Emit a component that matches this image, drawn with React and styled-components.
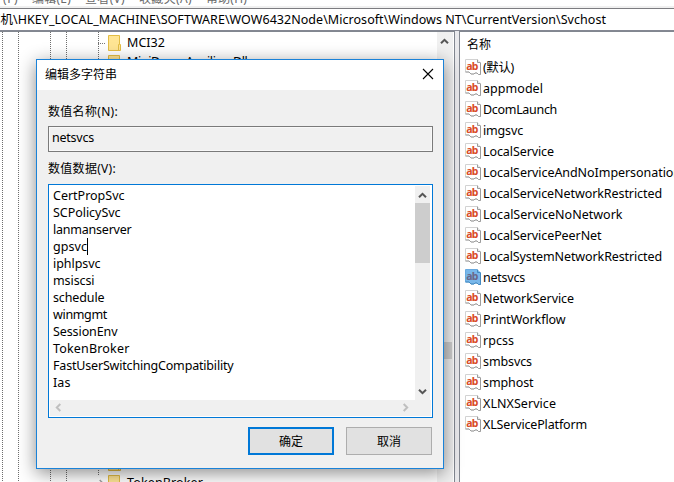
import React, { useLayoutEffect, useRef, useState } from "react";
import styled, { createGlobalStyle, css } from "styled-components";

const Global = createGlobalStyle`
  * { box-sizing: border-box; }
  body {
    margin: 0;
    overflow: hidden;
    background: #fff;
    color: #000;
    font: 12.5px/17px "Noto Sans", "Noto Sans CJK SC", sans-serif;
  }
`;

const Window = styled.div`
  position: relative;
  width: 674px;
  height: 482px;
  overflow: hidden;
  display: flex;
  flex-direction: column;
  background: #fff;
`;

const MenuBar = styled.nav`
  height: 8px;
  flex: none;
  display: flex;
  gap: 14px;
  align-items: flex-end;
  padding-bottom: 1px;
  margin-left: -22px;
  background: linear-gradient(#fff 0 6px, #f0f0f0 6px);
  color: #6a6a6a;
  font-size: 12px;
`;

const AddressBar = styled.div`
  height: 23px;
  flex: none;
  display: flex;
  align-items: center;
  margin-left: -12px;
  border-top: 1px solid #7c7c80;
  border-bottom: 1px solid #858893;
`;

const Panes = styled.div`
  flex: 1;
  display: flex;
  min-height: 0;
  background: #e9e9ec;
`;

const TreePane = styled.section`
  width: 455px;
  flex: none;
  display: flex;
  border-top: 1px solid #828790;
  border-right: 1px solid #828790;
  background: #fff;
`;

const dotted = "repeating-linear-gradient(#6e6e6e 0 1px, transparent 1px 2px)";

const Tree = styled.div`
  width: 437px;
  padding-top: 1px;
  display: flex;
  flex-direction: column;
  justify-content: space-between;
  background-image: ${dotted}, ${dotted}, ${dotted}, ${dotted}, ${dotted};
  background-size: 1px 100%;
  background-repeat: no-repeat;
  background-position: 2px 0, 18px 0, 50px 0, 66px 0, 98px 0;
`;

const TreeGroup = styled.div`
  margin-bottom: ${(p) => (p.$last ? "-11px" : 0)};
`;

const TreeRow = styled.div`
  height: 20px;
  display: flex;
  align-items: center;
  padding-left: 97px;
`;

const TreeName = styled.div`
  display: flex;
  margin-left: -1px;
  padding-bottom: ${(p) => (p.$raised ? "3px" : "1px")};
`;

const Hook = styled.span`
  width: 11px;
  flex: none;
  height: ${(p) => (p.$expand ? "14px" : "1px")};
  background: ${(p) =>
    p.$expand
      ? "#fff"
      : "repeating-linear-gradient(90deg, transparent 0 1px, #777 1px 2px) no-repeat 0 0 / 8px 1px"};
  display: flex;
  align-items: center;
`;

const FolderBox = styled.svg`
  width: 13px;
  height: 16px;
  flex: none;
  margin-right: 7px;
`;

const TreeScroll = styled.div`
  width: 16px;
  display: flex;
  flex-direction: column;
  align-items: center;
  background: #f0f0f0;
  padding: 5px 1px 0 0;
`;

const TreeThumb = styled.div`
  width: 15px;
  height: 17px;
  margin-top: 296px;
  background: #cdcdcd;
`;

const ListPane = styled.section`
  flex: 1;
  margin-left: 4px;
  min-width: 0;
  overflow: hidden;
  border-top: 1px solid #828790;
  border-left: 1px solid #828790;
  background: #fff;
`;

const ListHeader = styled.div`
  height: 25px;
  padding: 4px 0 0 7px;
  font-size: 12px;
`;

const ValueRow = styled.div`
  height: 21px;
  display: flex;
  align-items: center;
  padding-left: 5px;
`;

const ValueIconBox = styled.svg`
  width: 16px;
  height: 16px;
  flex: none;
  margin: 0 2px 1px 0;
`;

const AbText = styled.text`
  font: 700 10.5px "Noto Sans", "Open Sans", sans-serif;
`;

const Dialog = styled.div`
  position: absolute;
  left: 36px;
  top: 59px;
  width: 408px;
  height: 410px;
  display: flex;
  flex-direction: column;
  border: 1px solid #1a82d8;
  background: #f0f0f0;
  box-shadow: 0 4px 17px rgba(0, 0, 0, 0.46);
`;

const TitleBar = styled.header`
  height: 30px;
  flex: none;
  display: flex;
  align-items: center;
  justify-content: space-between;
  padding: 0 9px 1px 8px;
  background: #fff;
  font-size: 12px;
`;

const TitleIcon = styled.svg`
  width: 12px;
  height: 12px;
  margin-bottom: 2px;
`;

const DialogBody = styled.div`
  flex: 1;
  display: flex;
  flex-direction: column;
  padding: 13px 10px 13px 11px;
`;

const FieldLabel = styled.label`
  height: 17px;
  margin-bottom: ${(p) => p.$gap}px;
  font-size: 12px;
`;

const NameField = styled.div`
  height: 26px;
  margin-bottom: 8px;
  padding: 2px 0 0 3px;
  border: 1px solid #7a7a7a;
  box-shadow: inset 0 0 0 1px #f8f8f8;
`;

const DataField = styled.div`
  height: 234px;
  display: grid;
  grid-template: 214px 16px / 365px 16px;
  padding: 1px;
  border: 1px solid #0078d7;
  background: #fff;
`;

const Lines = styled.div`
  padding: 1px 0 0 3px;
`;

const Line = styled.div`
  height: 17px;
  display: flex;
`;

const Caret = styled.span`
  width: 1px;
  height: 17px;
  background: #000;
`;

const VScroll = styled.div`
  width: 15px;
  display: flex;
  flex-direction: column;
  align-items: center;
  padding: 5px 0 4px;
  background: #f0f0f0;
`;

const VThumb = styled.div`
  width: 15px;
  height: 60px;
  margin: 3px 0 auto;
  background: #cdcdcd;
`;

const HScroll = styled.div`
  grid-column: 1 / 3;
  display: flex;
  align-items: center;
  justify-content: space-between;
  padding: 0 21px 1px 4px;
  background: #f0f0f0;
`;

const Buttons = styled.footer`
  display: flex;
  justify-content: flex-end;
  gap: 12px;
  margin: 9px 1px 0 0;
`;

const Button = styled.button`
  width: 86px;
  height: 28px;
  padding: 0 0 2px;
  background: #e1e1e1;
  font: 12px/17px "Noto Sans CJK SC", sans-serif;
  color: #000;
  border-radius: 0;
  ${(p) =>
    p.$primary
      ? css`border: 2px solid #0078d7;`
      : css`border: 1px solid #adadad;`}
`;

const Text = styled.span`
  white-space: pre;
  flex: none;
`;

/* Text tracked so that its advance equals the given width. */
function Fit({ width, children }) {
  const ref = useRef(null);
  const [spacing, setSpacing] = useState(0);
  useLayoutEffect(() => {
    const natural = ref.current.getBoundingClientRect().width;
    setSpacing((width - natural) / children.length);
  }, [width, children]);
  return (
    <Text ref={ref} style={{ letterSpacing: `${spacing}px` }}>
      {children}
    </Text>
  );
}

function Chevron({ turn = 0, color = "#555", weight = 2 }) {
  return (
    <svg width="9" height="9" viewBox="0 0 9 9">
      <path
        d="M1 6.3 4.5 2.8 8 6.3"
        fill="none"
        stroke={color}
        strokeWidth={weight}
        transform={`rotate(${turn} 4.5 4.5)`}
      />
    </svg>
  );
}

function Folder() {
  return (
    <FolderBox viewBox="0 0 13 16">
      <path d="M.5.5h11v9h1v6H.5z" fill="#ffe594" stroke="#e3bd45" />
      <path d="M10.5 15V9.5h1" fill="none" stroke="#e3bd45" />
    </FolderBox>
  );
}

function ValueIcon({ selected }) {
  return (
    <ValueIconBox viewBox="0 0 16 16">
      <path
        d="M.5.5H12l3.500 3.500v11.500h-2l-1.500-1.500h-2l-1 1H6l-2-2H.5z"
        fill={selected ? "#78b7ea" : "#fff"}
        stroke={selected ? "#68aae0" : "#d2d2d2"}
      />
      <path
        d="M12.500.5V3.500h3M15.500 4v11.500h-2l-1.500-1.500H10l-1 1H6l-2-2H.5"
        fill="none"
        stroke={selected ? "#4589bf" : "#9c9c9c"}
      />
      <AbText x="1.3" y="10.6" textLength="12.2" fill={selected ? "#6b6688" : "#d94a26"}>
        ab
      </AbText>
    </ValueIconBox>
  );
}

const values = [
  ["(默认)", 31],
  ["appmodel", 60],
  ["DcomLaunch", 74],
  ["imgsvc", 40],
  ["LocalService", 71],
  ["LocalServiceAndNoImpersonation", 198],
  ["LocalServiceNetworkRestricted", 179],
  ["LocalServiceNoNetwork", 139.5],
  ["LocalServicePeerNet", 118.5],
  ["LocalSystemNetworkRestricted", 179],
  ["netsvcs", 42],
  ["NetworkService", 91],
  ["PrintWorkflow", 82.5],
  ["rpcss", 31],
  ["smbsvcs", 49],
  ["smphost", 50.5],
  ["XLNXService", 73],
  ["XLServicePlatform", 104],
];

const services = [
  ["CertPropSvc", 71.5],
  ["SCPolicySvc", 67.5],
  ["lanmanserver", 78.5],
  ["gpsvc", 34],
  ["iphlpsvc", 47.5],
  ["msiscsi", 41.5],
  ["schedule", 51.5],
  ["winmgmt", 54],
  ["SessionEnv", 64.5],
  ["TokenBroker", 76.5],
  ["FastUserSwitchingCompatibility", 180.5],
  ["Ias", 17.5],
];

const menus = [
  ["文件(F)", 40],
  ["编辑(E)", 39],
  ["查看(V)", 40],
  ["收藏夹(A)", 53],
  ["帮助(H)", 41],
];

export default function App() {
  return (
    <Window>
      <Global />
      <MenuBar>
        {menus.map(([name, width]) => (
          <Fit key={name} width={width}>{name}</Fit>
        ))}
      </MenuBar>
      <AddressBar>
        <Fit width={25}>算机</Fit>
        <Fit width={593}>
          {"\\HKEY_LOCAL_MACHINE\\SOFTWARE\\WOW6432Node\\Microsoft\\Windows NT\\CurrentVersion\\Svchost"}
        </Fit>
      </AddressBar>
      <Panes>
        <TreePane>
          <Tree>
            <TreeGroup>
              <TreeRow>
                <Hook />
                <Folder />
                <TreeName><Fit width={38}>MCI32</Fit></TreeName>
              </TreeRow>
              <TreeRow>
                <Hook />
                <Folder />
                <TreeName $raised><Fit width={126}>MiniDumpAuxiliaryDlls</Fit></TreeName>
              </TreeRow>
            </TreeGroup>
            <TreeGroup $last>
              <TreeRow><Hook /><Folder /></TreeRow>
              <TreeRow>
                <Hook $expand><Chevron turn={90} color="#a0a0a0" weight={1.5} /></Hook>
                <Folder />
                <TreeName><Fit width={76}>TokenBroker</Fit></TreeName>
              </TreeRow>
            </TreeGroup>
          </Tree>
          <TreeScroll>
            <Chevron />
            <TreeThumb />
          </TreeScroll>
        </TreePane>
        <ListPane>
          <ListHeader>名称</ListHeader>
          {values.map(([name, width]) => (
            <ValueRow key={name}>
              <ValueIcon selected={name === "netsvcs"} />
              <Fit width={width}>{name}</Fit>
            </ValueRow>
          ))}
        </ListPane>
      </Panes>
      <Dialog>
        <TitleBar>
          <Text>编辑多字符串</Text>
          <TitleIcon viewBox="0 0 12 12">
            <path d="M1 1l10 10M11 1 1 11" stroke="#000" strokeWidth="1.1" />
          </TitleIcon>
        </TitleBar>
        <DialogBody>
          <FieldLabel $gap={6}><Fit width={70}>数值名称(N):</Fit></FieldLabel>
          <NameField><Fit width={42}>netsvcs</Fit></NameField>
          <FieldLabel $gap={7}><Fit width={68}>数值数据(V):</Fit></FieldLabel>
          <DataField>
            <Lines>
              {services.map(([name, width]) => (
                <Line key={name}>
                  <Fit width={width}>{name}</Fit>
                  {name === "gpsvc" && <Caret />}
                </Line>
              ))}
            </Lines>
            <VScroll>
              <Chevron />
              <VThumb />
              <Chevron turn={180} />
            </VScroll>
            <HScroll>
              <Chevron turn={-90} color="#bfbfbf" />
              <Chevron turn={90} color="#bfbfbf" />
            </HScroll>
          </DataField>
          <Buttons>
            <Button $primary>确定</Button>
            <Button>取消</Button>
          </Buttons>
        </DialogBody>
      </Dialog>
    </Window>
  );
}
